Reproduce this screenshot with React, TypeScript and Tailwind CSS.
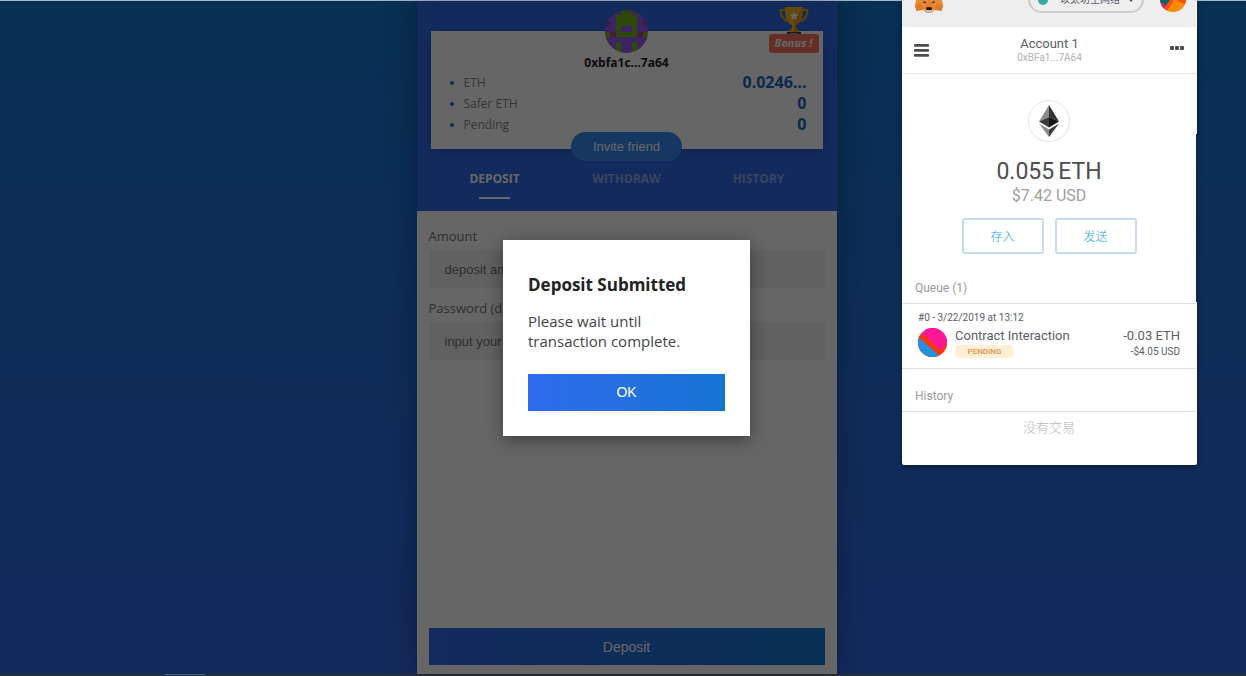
import { useState } from "react";
import type { ReactNode } from "react";

const avatarRows = ["pgpg", "ppgg", "mpgg", "ppgp", "gmgg", "pppp", "ppgp", "ppgp"];

const avatarColors: Record<string, string> = {
  p: "#915cf0",
  g: "#70b414",
  m: "#b0429a",
};

const balances = [
  { label: "ETH", value: "0.0246..." },
  { label: "Safer ETH", value: "0" },
  { label: "Pending", value: "0" },
];

const tabs = ["DEPOSIT", "WITHDRAW", "HISTORY"];

function Avatar() {
  return (
    <svg viewBox="0 0 8 8" className="mx-auto -mt-[21px] size-[43px] rounded-full" shapeRendering="crispEdges">
      {avatarRows.map((row, y) =>
        (row + row.split("").reverse().join("")).split("").map((c, x) => (
          <rect key={`${x}-${y}`} x={x} y={y} width="1" height="1" fill={avatarColors[c]} />
        ))
      )}
    </svg>
  );
}

function Trophy() {
  return (
    <svg viewBox="0 0 30 28" className="h-7 w-[30px]">
      <path d="M7 3H1.6c0 6 2 10 8.400 11.500M23 3h5.400c0 6-2 10-8.400 11.500" fill="none" stroke="#e8a317" strokeWidth="2" />
      <path d="M6 0h18c0 9-1 15-7 18v3l3 3v1H10v-1l3-3v-3C7 15 6 9 6 0z" fill="#ffb81f" />
      <path d="M24 0c0 9-1 15-7 18v3l3 3v1h-5V12z" fill="#e89c0c" />
      <path d="M15 4.500l1.300 2.900 3.100.3-2.300 2.100.7 3.100-2.800-1.600-2.800 1.600.7-3.100-2.300-2.100 3.100-.3z" fill="#fff" />
      <path d="M8 25h14v3H8z" fill="#38454f" />
      <path d="M11 26h8v2h-8z" fill="#8b949c" />
    </svg>
  );
}

function Fox() {
  return (
    <svg viewBox="0 0 28 13" className="h-[13px] w-7">
      <path d="M1 0h26l1 5-1.500 6-7-1-2.500 2.500h-6L8.500 10l-7 1L0 5z" fill="#ee8a34" />
      <path d="M0 5l6-2 3 6-7.500 2zM28 5l-6-2-3 6 7.500 2z" fill="#e07a2c" />
      <path d="M9 9l5-9 5 9-2 3.500h-6z" fill="#e87a28" />
      <path d="M9.500 9h9L17 12.500h-6z" fill="#c8bdb4" />
      <path d="M8 1l3.500 1-1 1.500L8 2.500zM20 1l-3.500 1 1 1.500 2.500-1z" fill="#344a5c" />
      <path d="M11.500 7.200h5l.4 2.800h-5.800z" fill="#1c1815" />
    </svg>
  );
}

function Ethereum() {
  return (
    <svg viewBox="0 0 20 32" className="h-8 w-5">
      <path d="M10 0v12L0 16.500z" fill="#8a8a8a" />
      <path d="M10 0v12l10 4.500z" fill="#343434" />
      <path d="M0 16.500L10 12v10.500z" fill="#393939" />
      <path d="M20 16.500L10 12v10.500z" fill="#141414" />
      <path d="M0 18.500l10 6V32z" fill="#8a8a8a" />
      <path d="M20 18.500l-10 6V32z" fill="#3b3b3b" />
    </svg>
  );
}

function MenuIcon() {
  return (
    <svg viewBox="0 0 15 13" className="h-[13px] w-[15px]" fill="#4d4d4d">
      <rect width="15" height="2.700" rx="0.800" />
      <rect y="5" width="15" height="2.700" rx="0.800" />
      <rect y="10" width="15" height="2.700" rx="0.800" />
    </svg>
  );
}

function Field({ id, label, placeholder }: { id: string; label: string; placeholder: string }) {
  return (
    <div className="mb-2.5 flex flex-col gap-1">
      <label htmlFor={id} className="text-[13px] leading-5 text-[#777]">{label}</label>
      <input
        id={id}
        placeholder={placeholder}
        className="h-[38px] w-full bg-[#f3f3f3] px-4 font-['Liberation_Sans',sans-serif] text-[13px] placeholder:text-[#757575]"
      />
    </div>
  );
}

function WalletButton({ children }: { children: ReactNode }) {
  return (
    <button className="h-9 w-[82px] rounded-[3px] border-2 border-[#c7ddec] pt-0.5 text-xs font-light text-[#259de5]">{children}</button>
  );
}

function SectionTitle({ children }: { children: ReactNode }) {
  return <h3 className="border-b border-[#dedede] px-[13px] pb-1.5 text-xs leading-[18px] text-[#9b9b9b]">{children}</h3>;
}

function Wallet() {
  return (
    <aside className="absolute top-0 right-[49px] z-20 w-[295px] rounded-b-xs bg-white pr-px pb-[27px] font-['Roboto','Noto_Sans_CJK_SC',sans-serif] text-[#5b5d67] shadow-[0_2px_5px_rgba(0,0,0,0.4)]">
      <span className="absolute top-[134px] right-0 h-[168px] w-px bg-[#0d2c57]" />

      <div className="flex h-[27px] items-start bg-[#eee] pr-2.5 pl-[13px]">
        <Fox />
        <button className="-mt-3.5 ml-auto flex h-[27px] w-[116px] items-center rounded-full border-2 border-[#cdcdcd] px-2 text-[10px]">
          <span className="mr-3 size-2.5 rounded-full bg-[#38a8a4]" />
          以太坊主网络
          <svg viewBox="0 0 6 4" className="ml-auto h-1 w-1.5"><path d="M0 0h6L3 4z" fill="#444" /></svg>
        </button>
        <svg viewBox="0 0 26 26" className="-mt-3.5 ml-4 size-[26px] rounded-full">
          <rect width="26" height="26" fill="#f98b06" />
          <path d="M0 0h14v13L4 24H0z" fill="#02665e" />
          <path d="M0 17l4 0 2 8H0z" fill="#f5128c" />
          <path d="M10 14L4 22l3 3 7-11zM13 12l13 7V0H13z" fill="#fc4f0c" />
        </svg>
      </div>

      <div className="flex h-[47px] items-center justify-between border-b border-[#e5e5e5] px-3">
        <button aria-label="Menu"><MenuIcon /></button>
        <div className="text-center">
          <p className="text-[13px] leading-4">Account 1</p>
          <p className="text-[10px] leading-3 text-[#b0b0b0]">0xBFa1...7A64</p>
        </div>
        <button aria-label="Account options" className="mb-1 flex gap-px">
          <span className="size-1 rounded-[1px] bg-[#4d4d4d]" />
          <span className="size-1 rounded-[1px] bg-[#4d4d4d]" />
          <span className="size-1 rounded-[1px] bg-[#4d4d4d]" />
        </button>
      </div>

      <div className="flex flex-col items-center pt-[26px]">
        <div className="flex size-[42px] items-center justify-center rounded-full border border-[#e5e5e5]">
          <Ethereum />
        </div>
        <p className="mt-4 flex gap-1 text-[23px] leading-7 text-[#4d4d4d]">
          <span>0.055</span>
          <span>ETH</span>
        </p>
        <p className="text-base leading-5 text-[#a0a0a0]">$7.42 USD</p>
        <div className="mt-3 flex gap-[11px]">
          <WalletButton>存入</WalletButton>
          <WalletButton>发送</WalletButton>
        </div>
      </div>

      <div className="mt-[25px]">
        <SectionTitle>Queue (1)</SectionTitle>
        <div className="h-[65px] border-b border-[#dfe2e5] px-4 pt-2">
          <p className="text-[10px] leading-3">#0 - 3/22/2019 at 13:12</p>
          <div className="mt-[3px] flex items-center">
            <svg viewBox="0 0 28 28" className="size-[29px] rounded-full">
              <rect width="28" height="28" fill="#fc1894" />
              <path d="M0 4l6 3 16 15 6-8v14H0z" fill="#fa3a05" />
              <path d="M6 6l16 15 6-8V0H8z" fill="#fc1894" />
              <path d="M0 9l3 2 18 16v1H0z" fill="#2490e0" />
            </svg>
            <div className="ml-2">
              <p className="text-[13px] leading-[18px]">Contract Interaction</p>
              <p className="h-[13px] w-[59px] rounded bg-[#ffefd7] text-center text-[8px] leading-[13px] font-medium text-[#d99347]">PENDING</p>
            </div>
            <div className="ml-auto text-right">
              <p className="text-[13px] leading-[18px]">-0.03 ETH</p>
              <p className="text-[10px] leading-[13px]">-$4.05 USD</p>
            </div>
          </div>
        </div>
      </div>

      <div className="mt-[18px]">
        <SectionTitle>History</SectionTitle>
        <p className="pt-1.5 text-center text-[13px] leading-5 font-light text-[#b8b8b8]">没有交易</p>
      </div>
    </aside>
  );
}

export default function App() {
  const [tab, setTab] = useState("DEPOSIT");
  const [open, setOpen] = useState(true);

  return (
    <div className="relative flex h-screen min-h-[600px] flex-col overflow-hidden font-['Open_Sans','Noto_Sans',sans-serif]">
      <div className="h-px bg-[#a4b7c9]" />

      <div className="relative flex flex-1 justify-center bg-linear-to-b from-[#1476d2] to-[#3069e8] pl-[7px]">
        <main className="flex w-[420px] flex-col bg-white shadow-[0_0_32px_rgba(0,0,0,0.3)]">
          <header className="bg-[#306ae9] px-3 pt-[30px] pb-3">
            <section className="relative mx-0.5 flex flex-col bg-white shadow-[0_4px_16px_rgba(0,0,0,0.15)]">
              <Avatar />
              <a href="#bonus" className="absolute -top-6 right-1 flex w-[50px] flex-col items-center">
                <Trophy />
                <span className="-mt-px h-[19px] w-full rounded-[3px] bg-[#ff7261] text-center text-[11px] leading-[18px] font-bold text-white italic">
                  Bonus !
                </span>
              </a>
              <p className="text-center text-xs leading-[19px] font-bold text-[#222]">0xbfa1c...7a64</p>
              <ul className="pr-4 pl-[19px]">
                {balances.map((b) => (
                  <li key={b.label} className="flex items-center leading-[21px]">
                    <span className="mr-2.5 size-1 rounded-full bg-[#2a6fd0]" />
                    <span className="text-xs leading-[21px] text-[#888]">{b.label}</span>
                    <span className="ml-auto text-base leading-[21px] font-bold text-[#1a66c4]">{b.value}</span>
                  </li>
                ))}
              </ul>
              <button className="-mt-[3px] -mb-3 h-[29px] w-[111px] self-center rounded-full bg-[#3a8af8] font-['Liberation_Sans',sans-serif] text-[13px] text-white">
                Invite friend
              </button>
            </section>
            <nav className="grid grid-cols-3 pt-5">
              {tabs.map((t) => (
                <button
                  key={t}
                  onClick={() => setTab(t)}
                  className={`flex flex-col items-center gap-2 text-xs leading-5 font-bold ${t === tab ? "text-white" : "text-[#88aaee]"}`}
                >
                  {t}
                  <span className={`h-0.5 w-[31px] ${t === tab ? "bg-white" : ""}`} />
                </button>
              ))}
            </nav>
          </header>

          <form className="flex flex-1 flex-col px-3 pt-[15px] pb-[9px]" onSubmit={(e) => e.preventDefault()}>
            <Field id="amount" label="Amount" placeholder="deposit amount" />
            <Field id="password" label="Password (deposit)" placeholder="input your password" />
            <button className="mt-auto h-[37px] bg-linear-to-r from-[#306ae9] to-[#1577d2] font-['Liberation_Sans',sans-serif] text-sm text-white">
              Deposit
            </button>
          </form>
        </main>

        {open && (
          <div className="absolute inset-0 z-10 flex items-center justify-center bg-black/60 pl-[7px]">
            <div role="dialog" aria-labelledby="dialog-title" className="w-[247px] bg-white p-[25px] shadow-[0_4px_16px_rgba(0,0,0,0.4)]">
              <h2 id="dialog-title" className="mt-2 text-[17px] leading-6 font-bold text-[#222]">Deposit Submitted</h2>
              <p className="mt-3.5 text-[15px] leading-5 text-[#444]">
                Please wait until
                <br />
                transaction complete.
              </p>
              <button
                onClick={() => setOpen(false)}
                className="mt-[23px] h-[37px] w-full bg-linear-to-r from-[#2f6aec] to-[#1474d3] font-['Liberation_Sans',sans-serif] text-sm text-white"
              >
                OK
              </button>
            </div>
          </div>
        )}
      </div>

      <div className="h-0.5 bg-[#2a2d3a] pl-[165px]">
        <div className="h-px w-10 bg-[#555c77]" />
      </div>

      <Wallet />
    </div>
  );
}
